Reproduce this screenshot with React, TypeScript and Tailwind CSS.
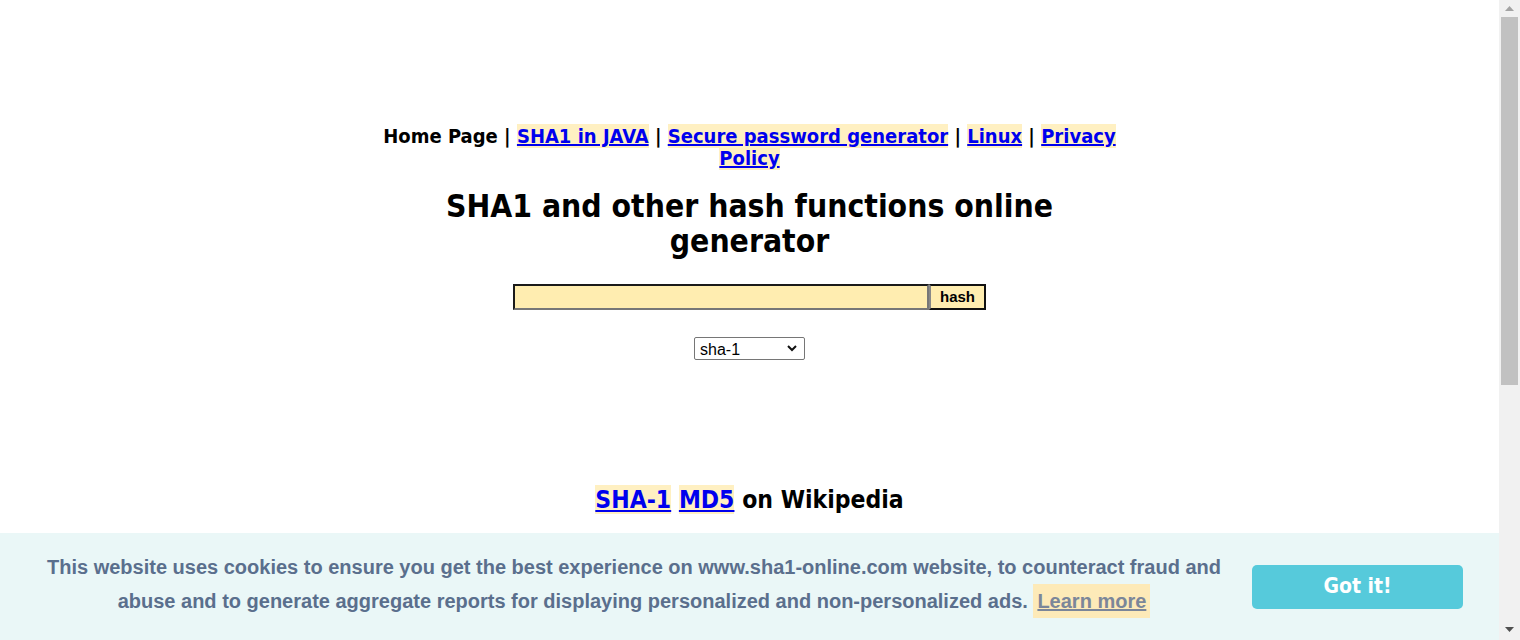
import React from "react";

const tahoma = { fontFamily: '"DejaVu Sans Condensed", "DejaVu Sans", sans-serif' };

function Scrollbar() {
  return (
    <div className="flex h-[640px] w-[21px] shrink-0 flex-col items-center bg-[#f1f1f1]">
      <div className="flex h-[17px] w-full items-center justify-center">
        <svg width="9" height="5" viewBox="0 0 9 5"><path d="M0 5 L4.5 0 L9 5 Z" fill="#a3a3a3" /></svg>
      </div>
      <div className="h-[368px] w-[17px] bg-[#c1c1c1]" />
      <div className="flex-1" />
      <div className="flex h-[22px] w-full items-center justify-center">
        <svg width="9" height="5" viewBox="0 0 9 5"><path d="M0 0 L9 0 L4.5 5 Z" fill="#505050" /></svg>
      </div>
    </div>
  );
}

function NavLink({ children }: { children: React.ReactNode }) {
  return <a href="#" className="bg-[#fff0c2] text-[#0000ee] underline">{children}</a>;
}

export default function App() {
  return (
    <div className="flex h-[640px] w-[1520px] overflow-hidden bg-white text-black">
      <div className="flex-1 overflow-hidden">
        <div className="mx-auto w-[750px] pt-[125px] text-center font-bold" style={tahoma}>
          <nav className="text-[20px] leading-[22px]">
            Home Page | <NavLink>SHA1 in JAVA</NavLink> | <NavLink>Secure password generator</NavLink> | <NavLink>Linux</NavLink> | <NavLink>Privacy Policy</NavLink>
          </nav>
          <h1 className="mt-[20px] text-[31.6px] leading-[35px]">SHA1 and other hash functions online generator</h1>
          <div className="mt-[25px] flex justify-center">
            <input
              type="text"
              className="h-[26px] w-[416px] border-2 border-t-[#1a1a1a] border-l-[#1a1a1a] border-b-[#777] border-r-[#777] bg-[#ffedb0] outline-none"
            />
            <button
              className="h-[26px] w-[57px] border-2 border-[#111] border-l-[#888] bg-[#ffedb0] text-[15px] font-bold"
              style={{ fontFamily: '"Liberation Sans", Arial, sans-serif' }}
            >
              hash
            </button>
          </div>
          <div className="mt-[27px] flex justify-center">
            <div className="relative h-[23px] w-[111px]">
              <select
                className="h-[23px] w-[111px] appearance-none rounded-[2px] border border-[#767676] bg-white pl-[5px] text-left text-[16px] font-normal text-black"
                style={{ fontFamily: '"Liberation Sans", Arial, sans-serif' }}
                defaultValue="sha-1"
              >
                <option value="sha-1">sha-1</option>
              </select>
              <svg className="pointer-events-none absolute right-[8px] top-[8px]" width="10" height="7" viewBox="0 0 10 7">
                <path d="M1 1 L5 5 L9 1" fill="none" stroke="#111" strokeWidth="2" />
              </svg>
            </div>
          </div>
          <div className="mt-[125px] text-[24.5px] leading-[30px]">
            <NavLink>SHA-1</NavLink> <NavLink>MD5</NavLink> on Wikipedia
          </div>
        </div>
      </div>
      <Scrollbar />
      <div
        className="fixed bottom-0 left-0 right-[21px] flex h-[107px] items-center gap-[20px] bg-[#eaf7f7] px-[36px]"
        style={{ fontFamily: '"Liberation Sans", Arial, sans-serif' }}
      >
        <p className="mb-[6px] flex-1 text-center text-[20px] font-bold leading-[34px] text-[#5a6f8d]">
          This website uses cookies to ensure you get the best experience on www.sha1-online.com website, to counteract fraud and abuse and to generate aggregate reports for displaying personalized and non-personalized ads.{" "}
          <a href="#" className="bg-[#fdeab8] px-[4px] py-[6px] text-[#7b8699] underline">Learn more</a>
        </p>
        <button className="h-[44px] w-[211px] rounded-[5px] bg-[#56cadb] text-[21px] font-bold text-white" style={tahoma}>
          Got it!
        </button>
      </div>
    </div>
  );
}
